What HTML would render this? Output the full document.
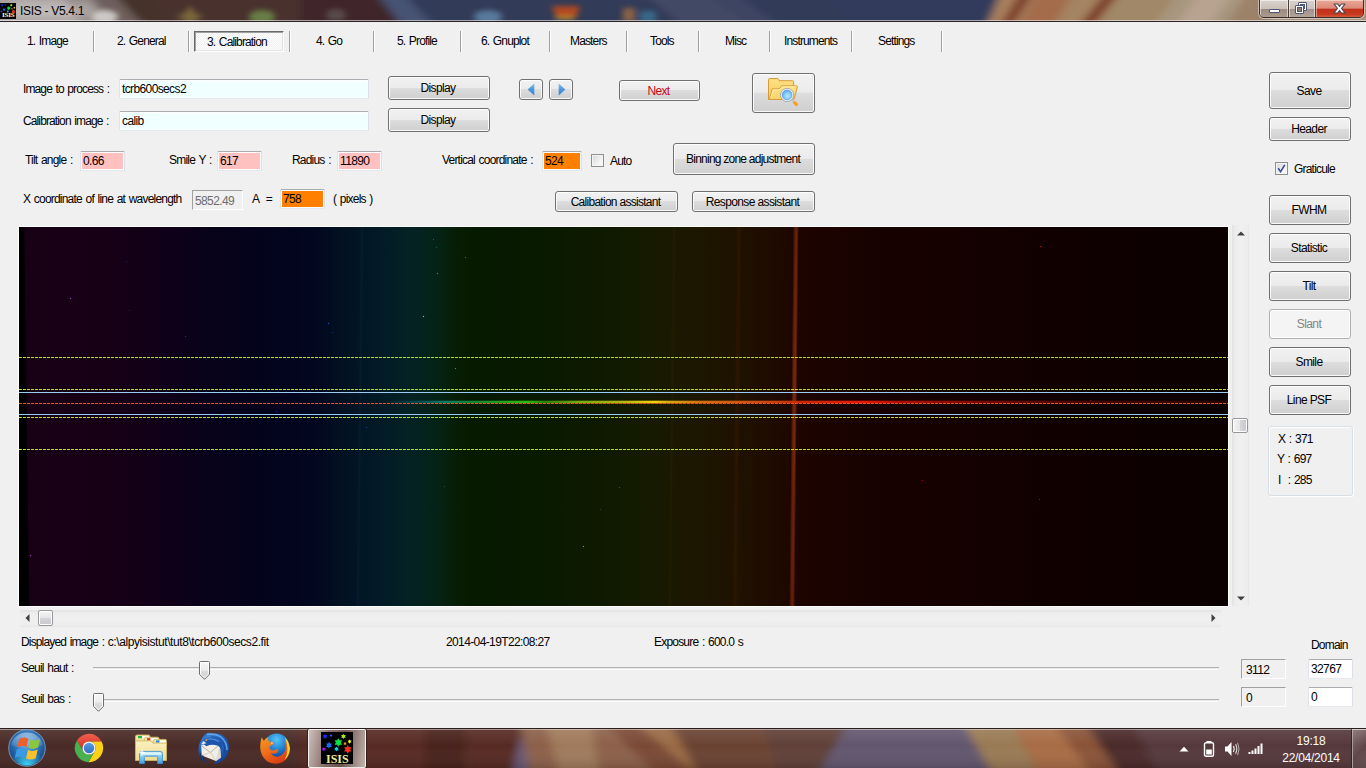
<!DOCTYPE html>
<html><head><meta charset="utf-8"><title>ISIS - V5.4.1</title>
<style>
html,body{margin:0;padding:0;}
body{width:1366px;height:768px;overflow:hidden;position:relative;background:#f0f0f0;font-family:"Liberation Sans",sans-serif;font-size:11px;color:#000;}
.a{position:absolute;white-space:pre;}
.t{position:absolute;white-space:pre;line-height:14px;height:14px;font-size:12px;letter-spacing:-0.8px;word-spacing:1.1px;}
/* title bar */
#tb{position:absolute;left:0;top:0;width:1366px;height:22px;overflow:hidden;background:#44302c;}
#tb .l1{position:absolute;left:0;top:20px;width:1366px;height:1px;background:rgba(255,255,255,.55);}
#tb .l2{position:absolute;left:0;top:21px;width:1366px;height:1px;background:#2a2424;}
/* buttons */
.b{position:absolute;box-sizing:border-box;border:1px solid #707070;border-radius:3px;
 background:linear-gradient(#f2f2f2 0%,#ebebeb 48%,#dddddd 50%,#cfcfcf 100%);box-shadow:inset 0 0 0 1px rgba(255,255,255,.85);
 text-align:center;font-size:12px;letter-spacing:-0.62px;white-space:pre;}
.b span{position:absolute;left:-2px;right:0;top:50%;margin-top:-7px;line-height:14px;}
.b.dis{border-color:#adb2b5;background:#f4f4f4;color:#838383;}
/* inputs */
.in{position:absolute;box-sizing:border-box;border-radius:1.5px;box-shadow:inset 0 0 0 1px #fff;border:1px solid #abadb3;border-top-color:#abadb3;border-color:#abadb3 #dbdfe6 #e3e9ef #e2e3ea;background:#f0ffff;font-size:12px;letter-spacing:-0.62px;line-height:14px;padding:2px 0 0 2px;white-space:pre;}
.in3{position:absolute;box-sizing:border-box;border:1px solid;border-color:#a0a0a0 #fff #fff #a0a0a0;background:#f0f0f0;font-size:12px;letter-spacing:-0.62px;line-height:14px;padding:3px 0 0 4px;white-space:pre;}
.sep{position:absolute;top:31px;width:1px;height:21px;background:#a0a0a0;box-shadow:1px 0 0 #fff;}
</style></head><body>

<!-- TITLE BAR -->
<div id="tb">
 <svg class="a" style="left:0;top:0" width="1366" height="22" viewBox="0 0 1366 22">
  <defs><filter id="bt" x="-5%" y="-80%" width="110%" height="260%"><feGaussianBlur stdDeviation="5 2.5"/></filter>
  <filter id="bt2" x="-50%" y="-80%" width="200%" height="260%"><feGaussianBlur stdDeviation="3 2.5"/></filter></defs>
  <g filter="url(#bt)">
   <rect x="-20" y="-10" width="1406" height="42" fill="#44302c"/>
   <polygon points="-20,-10 110,-10 150,32 -20,32" fill="#6e5f5b"/>
   <polygon points="-20,-10 85,-10 118,32 -20,32" fill="#8f8583"/>
   <polygon points="-20,-10 60,-10 85,32 -20,32" fill="#a9a19f"/>
   <polygon points="150,-10 300,-10 300,32 170,32" fill="#4a322d"/>
   <polygon points="300,-10 374,-10 407,32 300,32" fill="#40282a"/>
   <polygon points="374,-10 1002,-10 984,32 407,32" fill="#313a58"/>
   <polygon points="374,-10 400,-10 440,32 407,32" fill="#465272"/>
   <polygon points="640,-10 700,-10 760,32 690,32" fill="#424965"/>
   <polygon points="700,-10 730,-10 790,32 760,32" fill="#3c4563"/>
   <polygon points="820,-10 1002,-10 984,32 860,32" fill="#303b5b"/>
   <polygon points="1002,-10 1400,-10 1400,32 984,32" fill="#a8805f"/>
   <polygon points="1022,-10 1036,-10 1008,32 996,32" fill="#7c3e28"/>
   <polygon points="1040,-10 1075,-10 1050,32 1015,32" fill="#a46c4c"/>
   <polygon points="1075,-10 1105,-10 1075,32 1050,32" fill="#a48462"/>
   <polygon points="1108,-10 1122,-10 1088,32 1074,32" fill="#7c3e28"/>
   <polygon points="1124,-10 1180,-10 1150,32 1092,32" fill="#a08868"/>
   <polygon points="1180,-10 1400,-10 1400,32 1150,32" fill="#a8967f"/>
   <polygon points="1200,-10 1235,-10 1205,32 1172,32" fill="#b8a290"/>
   <polygon points="1250,-10 1290,-10 1262,32 1220,32" fill="#9c8268"/>
   <polygon points="1300,-10 1400,-10 1400,32 1280,32" fill="#a8927e"/>
  </g>
  <g filter="url(#bt2)">
   <ellipse cx="105" cy="17" rx="13" ry="7" fill="#d4d0ce" opacity=".9"/>
   <polygon points="190,6 196,14 204,16 196,20 190,26 184,20 176,16 184,14" fill="#8a7440" opacity=".8"/>
   <ellipse cx="262" cy="17" rx="13" ry="7" fill="#70904a" opacity=".8"/>
   <ellipse cx="336" cy="15" rx="10" ry="6" fill="#6a6060" opacity=".6"/>
   <ellipse cx="488" cy="17" rx="14" ry="7" fill="#6a94b8" opacity=".7"/>
   <polygon points="552,6 580,6 576,18 556,18" fill="#b8481c" opacity=".95"/>
   <rect x="556" y="16" width="18" height="4" fill="#c8a030" opacity=".7"/>
   <rect x="623" y="8" width="12" height="14" fill="#a87040" opacity=".75"/>
   <rect x="640" y="11" width="16" height="12" fill="#3a7a9a" opacity=".7"/>
  </g>
 </svg>
 <!-- text glow -->
 <div class="a" style="left:10px;top:3px;width:85px;height:15px;border-radius:8px;background:rgba(255,255,255,.28);filter:blur(5px)"></div>
 <!-- app icon -->
 <div class="a" style="left:0;top:3px;width:16px;height:16px;background:#000;overflow:hidden">
  <svg class="a" style="left:0;top:0" width="16" height="16" viewBox="0 0 32 32"><polygon points="4.10,1.70 4.88,3.04 6.44,3.05 5.67,4.40 6.44,5.75 4.88,5.76 4.10,7.10 3.32,5.76 1.76,5.75 2.53,4.40 1.76,3.05 3.32,3.04" fill="#1a28f0"/><polygon points="10.10,2.10 10.54,2.85 11.40,2.85 10.97,3.60 11.40,4.35 10.54,4.35 10.10,5.10 9.66,4.35 8.80,4.35 9.23,3.60 8.80,2.85 9.66,2.85" fill="#1a6af0"/><polygon points="22.50,1.70 23.28,3.04 24.84,3.05 24.07,4.40 24.84,5.75 23.28,5.76 22.50,7.10 21.72,5.76 20.16,5.75 20.93,4.40 20.16,3.05 21.72,3.04" fill="#a0e820"/><polygon points="17.40,6.20 18.65,8.34 21.12,8.35 19.89,10.50 21.12,12.65 18.65,12.66 17.40,14.80 16.15,12.66 13.68,12.65 14.91,10.50 13.68,8.35 16.15,8.34" fill="#08e048"/><polygon points="28.60,7.30 29.24,8.39 30.51,8.40 29.88,9.50 30.51,10.60 29.24,10.61 28.60,11.70 27.96,10.61 26.69,10.60 27.32,9.50 26.69,8.40 27.96,8.39" fill="#f0f020"/><polygon points="24.00,9.80 24.52,10.70 25.56,10.70 25.04,11.60 25.56,12.50 24.52,12.50 24.00,13.40 23.48,12.50 22.44,12.50 22.96,11.60 22.44,10.70 23.48,10.70" fill="#f09a20"/><polygon points="8.00,9.80 8.99,11.49 10.94,11.50 9.97,13.20 10.94,14.90 8.99,14.91 8.00,16.60 7.01,14.91 5.06,14.90 6.03,13.20 5.06,11.50 7.01,11.49" fill="#1a6af8"/><polygon points="2.90,14.90 3.54,15.99 4.81,16.00 4.18,17.10 4.81,18.20 3.54,18.21 2.90,19.30 2.26,18.21 0.99,18.20 1.62,17.10 0.99,16.00 2.26,15.99" fill="#a010e8"/><polygon points="15.50,14.50 16.23,15.74 17.67,15.75 16.95,17.00 17.67,18.25 16.23,18.26 15.50,19.50 14.78,18.26 13.33,18.25 14.05,17.00 13.33,15.75 14.77,15.74" fill="#10d0f0"/><polygon points="26.80,13.10 28.05,15.24 30.52,15.25 29.29,17.40 30.52,19.55 28.05,19.56 26.80,21.70 25.55,19.56 23.08,19.55 24.31,17.40 23.08,15.25 25.55,15.24" fill="#f83018"/></svg>
  <span class="a" style="left:2px;top:9px;font:bold 7px/7px 'Liberation Serif',serif;color:#fafad8;letter-spacing:-0.2px">ISIS</span>
 </div>
 <span class="a" style="left:20px;top:4px;font-size:12px;line-height:15px;letter-spacing:-0.3px;color:#000">ISIS - V5.4.1</span>
 <!-- caption buttons -->
 <div class="a" style="left:1259px;top:-1px;width:105px;height:19px;box-sizing:border-box;border:1px solid #3a2e2c;border-radius:0 0 5px 5px;overflow:hidden;box-shadow:0 0 0 1px rgba(255,255,255,.45)">
  <div class="a" style="left:0;top:0;width:28px;height:18px;background:linear-gradient(180deg,#d9d2cd 0%,#cbc1ba 48%,#9b8b7f 52%,#ad9c8f 100%);box-shadow:inset 0 0 0 1px rgba(255,255,255,.55)"></div>
  <div class="a" style="left:28px;top:0;width:1px;height:18px;background:#4a3c38"></div>
  <div class="a" style="left:29px;top:0;width:26px;height:18px;background:linear-gradient(180deg,#d9d2cd 0%,#cbc1ba 48%,#a1938a 52%,#b3a69c 100%);box-shadow:inset 0 0 0 1px rgba(255,255,255,.55)"></div>
  <div class="a" style="left:55px;top:0;width:1px;height:18px;background:#4a3c38"></div>
  <div class="a" style="left:56px;top:0;width:48px;height:18px;background:linear-gradient(180deg,#eba898 0%,#dc8a78 45%,#c4301a 52%,#c83a20 80%,#d8684a 100%);box-shadow:inset 0 0 0 1px rgba(255,255,255,.45)"></div>
  <!-- minimize -->
  <div class="a" style="left:9px;top:9px;width:11px;height:4px;box-sizing:border-box;background:#fff;border:1px solid #4d5370;border-radius:1px"></div>
  <!-- restore -->
  <div class="a" style="left:38px;top:2px;width:9px;height:9px;box-sizing:border-box;border:1px solid #4d5370;border-radius:1px;background:#fff"><i class="a" style="left:2px;top:2px;width:3px;height:3px;background:#b7ada6;box-shadow:0 0 0 1px #4d5370"></i></div>
  <div class="a" style="left:35px;top:5px;width:9px;height:9px;box-sizing:border-box;border:1px solid #4d5370;border-radius:1px;background:#fff"><i class="a" style="left:2px;top:2px;width:3px;height:3px;background:#8d7d72;box-shadow:0 0 0 1px #4d5370"></i></div>
  <!-- close -->
  <svg class="a" style="left:73px;top:3px" width="13" height="11" viewBox="0 0 13 11"><path d="M1 1 H4.6 L6.5 3.3 L8.4 1 H12 L8.6 5.4 L12 10 H8.4 L6.5 7.5 L4.6 10 H1 L4.4 5.4 Z" fill="#fff" stroke="#4a4450" stroke-width="1.1" stroke-linejoin="round"/></svg>
 </div>
 <div class="l1"></div><div class="l2"></div>
</div>

<!-- CLIENT -->
<div id="tabs">
<span class="t" style="letter-spacing:-0.86px;left:27px;top:34px">1. Image</span>
<span class="t" style="letter-spacing:-0.86px;left:117px;top:34px">2. General</span>
<div class="a" style="left:194px;top:31px;width:90px;height:21px;box-sizing:border-box;border:1px solid;border-color:#696969 #fff #fff #696969;box-shadow:inset 1px 1px 0 #a0a0a0,inset -1px -1px 0 #e3e3e3;background:repeating-conic-gradient(#ffffff 0 25%,#f0f0f0 0 50%) 0 0/2px 2px"></div>
<span class="t" style="letter-spacing:-0.86px;left:207px;top:35px">3. Calibration</span>
<span class="t" style="letter-spacing:-0.86px;left:316px;top:34px">4. Go</span>
<span class="t" style="letter-spacing:-0.86px;left:397px;top:34px">5. Profile</span>
<span class="t" style="letter-spacing:-0.86px;left:481px;top:34px">6. Gnuplot</span>
<span class="t" style="letter-spacing:-0.86px;left:570px;top:34px">Masters</span>
<span class="t" style="letter-spacing:-0.86px;left:650px;top:34px">Tools</span>
<span class="t" style="letter-spacing:-0.86px;left:725px;top:34px">Misc</span>
<span class="t" style="letter-spacing:-0.86px;left:784px;top:34px">Instruments</span>
<span class="t" style="letter-spacing:-0.86px;left:878px;top:34px">Settings</span>
<div class="sep" style="left:93px"></div><div class="sep" style="left:188px"></div><div class="sep" style="left:289px"></div><div class="sep" style="left:373px"></div><div class="sep" style="left:460px"></div><div class="sep" style="left:549px"></div><div class="sep" style="left:626px"></div><div class="sep" style="left:698px"></div><div class="sep" style="left:769px"></div><div class="sep" style="left:851px"></div><div class="sep" style="left:941px"></div>
</div>

<!-- ROW 1/2 -->
<span class="t" style="left:23px;top:82px;letter-spacing:-0.88px">Image to process :</span>
<div class="in" style="left:119px;top:79px;width:250px;height:20px">tcrb600secs2</div>
<span class="t" style="left:23px;top:114px;letter-spacing:-0.88px">Calibration image :</span>
<div class="in" style="left:119px;top:111px;width:250px;height:20px">calib</div>
<div class="b" style="left:388px;top:76px;width:102px;height:24px"><span>Display</span></div>
<div class="b" style="left:388px;top:108px;width:102px;height:24px"><span>Display</span></div>
<div class="b" style="left:519px;top:79px;width:24px;height:21px"><svg class="a" style="left:7px;top:3px" width="8" height="13" viewBox="0 0 8 13"><defs><linearGradient id="ar" x1="0" y1="0" x2="0" y2="1"><stop offset="0" stop-color="#86c0ec"/><stop offset=".5" stop-color="#4a98dc"/><stop offset="1" stop-color="#3a84d0"/></linearGradient></defs><path d="M7.3 0.6 L0.6 6.5 L7.3 12.4 Z" fill="url(#ar)"/></svg></div>
<div class="b" style="left:549px;top:79px;width:24px;height:21px"><svg class="a" style="left:8px;top:3px" width="8" height="13" viewBox="0 0 8 13"><path d="M0.7 0.6 L7.4 6.5 L0.7 12.4 Z" fill="url(#ar)"/></svg></div>
<div class="b" style="left:619px;top:80px;width:81px;height:21px;color:#c60a18"><span>Next</span></div>
<div class="b" style="left:752px;top:73px;width:63px;height:40px" id="folderbtn"><svg class="a" style="left:13px;top:2px" width="34" height="32" viewBox="766 76 34 32">
<defs><linearGradient id="fo1" x1="0" y1="0" x2="0" y2="1"><stop offset="0" stop-color="#fbe084"/><stop offset="1" stop-color="#f5cd5c"/></linearGradient>
<linearGradient id="fo2" x1="0" y1="0" x2="0" y2="1"><stop offset="0" stop-color="#fde48c"/><stop offset="1" stop-color="#f7d468"/></linearGradient>
<radialGradient id="gl" cx="55%" cy="60%" r="60%"><stop offset="0" stop-color="#b4ecfc"/><stop offset=".6" stop-color="#7cc4f4"/><stop offset="1" stop-color="#4a9ae8"/></radialGradient></defs>
<path d="M768.5 79.5 Q768.5 78.5 769.5 78.5 H777.5 Q778.5 78.5 778.7 79.5 L779 80.7 H792.5 Q793.6 80.7 793.6 81.8 V99.5 H768.5 Z" fill="url(#fo1)" stroke="#d99a38" stroke-width="1"/>
<path d="M769.3 99.5 L772.3 88.8 H779.4 L781.6 85.8 H796.4 Q797.6 85.8 797.3 87 L794 99.5 Z" fill="url(#fo2)" stroke="#d99a38" stroke-width="1" stroke-linejoin="round"/>
<path d="M770.6 98.4 L773.2 89.8 H779.9 L782.1 86.8 H796" fill="none" stroke="#fff3c0" stroke-width=".8" opacity=".9"/>
<path d="M791.3 99.3 L796.3 104.3" stroke="#c4c8d2" stroke-width="2.6" stroke-linecap="round"/>
<path d="M794.6 102.6 L796.4 104.4" stroke="#f6a21c" stroke-width="3.2" stroke-linecap="round"/>
<circle cx="787.1" cy="94.9" r="5.7" fill="url(#gl)" stroke="#f4f6fa" stroke-width="1.5"/>
<circle cx="787.1" cy="94.9" r="6.6" fill="none" stroke="#8c94a4" stroke-width=".7"/>
<circle cx="787.1" cy="94.9" r="4.9" fill="none" stroke="#3c8ce0" stroke-width=".7" opacity=".8"/>
</svg></div>

<!-- ROW 3 -->
<span class="t" style="left:25px;top:153px">Tilt angle :</span>
<div class="in" style="left:80px;top:151px;width:45px;height:20px;background:#ffc0c0;box-shadow:inset 0 0 0 1px #fff">0.66</div>
<span class="t" style="left:169px;top:153px">Smile Y :</span>
<div class="in" style="left:217px;top:151px;width:45px;height:20px;background:#ffc0c0;box-shadow:inset 0 0 0 1px #fff">617</div>
<span class="t" style="left:292px;top:153px">Radius :</span>
<div class="in" style="left:337px;top:151px;width:45px;height:20px;background:#ffc0c0;box-shadow:inset 0 0 0 1px #fff">11890</div>
<span class="t" style="left:442px;top:153px">Vertical coordinate :</span>
<div class="in" style="left:542px;top:151px;width:40px;height:20px;background:#ff8000;box-shadow:inset 0 0 0 1px #fff">524</div>
<div class="a" style="left:591px;top:154px;width:13px;height:13px;box-sizing:border-box;border:1px solid #8e8f8f;background:linear-gradient(135deg,#d5d5d5,#f6f6f6 70%);box-shadow:inset 0 0 0 1px #f4f4f4"></div>
<span class="t" style="left:610px;top:154px">Auto</span>
<div class="b" style="left:673px;top:143px;width:142px;height:32px"><span style="letter-spacing:-0.76px">Binning zone adjustment</span></div>

<!-- ROW 4 -->
<span class="t" style="left:23px;top:192px">X coordinate of line at wavelength</span>
<div class="in3" style="left:192px;top:190px;width:51px;height:20px;color:#6d6d6d;padding-left:2px">5852.49</div>
<span class="t" style="left:252px;top:192px">A  =</span>
<div class="in" style="left:280px;top:189px;width:45px;height:20px;background:#ff8000;box-shadow:inset 0 0 0 1px #fff">758</div>
<span class="t" style="left:333px;top:192px">( pixels )</span>
<div class="b" style="left:555px;top:191px;width:123px;height:21px"><span style="letter-spacing:-0.72px">Calibation assistant</span></div>
<div class="b" style="left:692px;top:191px;width:123px;height:21px"><span>Response assistant</span></div>

<!-- RIGHT PANEL -->
<div class="b" style="left:1269px;top:72px;width:82px;height:37px"><span>Save</span></div>
<div class="b" style="left:1269px;top:117px;width:82px;height:24px"><span>Header</span></div>
<div class="a" style="left:1275px;top:162px;width:13px;height:13px;box-sizing:border-box;border:1px solid #8e8f8f;background:linear-gradient(135deg,#d5d5d5,#f6f6f6 70%);box-shadow:inset 0 0 0 1px #f4f4f4"><svg class="a" style="left:1px;top:1px" width="9" height="9" viewBox="0 0 9 9"><path d="M1.2 4.2 L3.6 7.6 L7.8 0.8" fill="none" stroke="#3a4a9c" stroke-width="1.6"/></svg></div>
<span class="t" style="left:1294px;top:162px">Graticule</span>
<div class="b" style="left:1269px;top:195px;width:82px;height:30px"><span>FWHM</span></div>
<div class="b" style="left:1269px;top:233px;width:82px;height:30px"><span>Statistic</span></div>
<div class="b" style="left:1269px;top:271px;width:82px;height:30px"><span>Tilt</span></div>
<div class="b dis" style="left:1269px;top:309px;width:82px;height:30px"><span>Slant</span></div>
<div class="b" style="left:1269px;top:347px;width:82px;height:30px"><span>Smile</span></div>
<div class="b" style="left:1269px;top:385px;width:82px;height:30px"><span>Line PSF</span></div>
<div class="a" style="left:1268px;top:426px;width:85px;height:70px;box-sizing:border-box;border:1px solid #d5dfe5;border-radius:3px;box-shadow:inset 1px 1px 0 #fff,1px 1px 0 #fff"></div>
<span class="t" style="left:1278px;top:432px">X : 371</span>
<span class="t" style="left:1277px;top:452px">Y : 697</span>
<span class="t" style="left:1278px;top:473px">I  : 285</span>

<!-- IMAGE -->
<!--IMG--><div id="img" class="a" style="left:19px;top:227px;width:1209px;height:379px;overflow:hidden;background:linear-gradient(90deg,#180015 0px,#170016 81px,#100018 141px,#08021a 186px,#04031c 241px,#02051e 281px,#020a20 306px,#021122 321px,#021a26 361px,#042224 391px,#052214 421px,#061e06 436px,#061a00 451px,#081a00 521px,#0e1a00 581px,#161a00 631px,#1c1700 671px,#1f1200 716px,#1e0b00 756px,#1d0400 781px,#190200 831px,#140100 931px,#0f0000 1081px,#0b0000 1209px)">
<svg class="a" style="left:0;top:0" width="12" height="379" viewBox="0 0 12 379"><polygon points="0,0 5.2,0 10.2,379 0,379" fill="#000"/></svg>
<div class="a" style="left:339px;top:-4px;width:4px;height:387px;background:linear-gradient(90deg,transparent,rgba(20,60,120,.14),transparent);transform:skewX(-0.66deg)"></div>
<div class="a" style="left:651px;top:-4px;width:4px;height:387px;background:linear-gradient(90deg,transparent,rgba(60,50,0,.18),transparent);transform:skewX(-0.66deg)"></div>
<div class="a" style="left:715px;top:-4px;width:6px;height:387px;background:linear-gradient(90deg,transparent,rgba(90,40,0,.22),transparent);transform:skewX(-0.66deg)"></div>
<div class="a" style="left:772px;top:-4px;width:6px;height:387px;background:linear-gradient(90deg,transparent,#6c2408 35%,#7a2a0a 65%,transparent);transform:skewX(-0.6deg);-webkit-mask-image:linear-gradient(180deg,rgba(0,0,0,.8),#000 45%,rgba(0,0,0,.75));mask-image:linear-gradient(180deg,rgba(0,0,0,.8),#000 45%,rgba(0,0,0,.75))"></div>
<div class="a" style="left:0;top:173px;width:1209px;height:4px;background:linear-gradient(90deg,rgba(0,0,0,0) 0px,rgba(0,60,80,0) 366px,rgba(0,110,120,.6) 401px,#0a806a 426px,#109030 456px,#30c810 508px,#2a8a08 526px,#80b810 561px,#b8c010 601px,#ffe010 636px,#e0b010 651px,#e07810 681px,#d85010 741px,#d02c08 781px,#f81808 845px,#b81008 881px,#800a04 961px,#4a0602 1061px,#2a0301 1209px);-webkit-mask-image:linear-gradient(180deg,transparent,#000 40%,#000 60%,transparent);mask-image:linear-gradient(180deg,transparent,#000 40%,#000 60%,transparent)"></div>
<div class="a" style="left:0;top:130px;width:1209px;height:1px;background:repeating-linear-gradient(90deg,#b5e61d 0 3px,transparent 3px 4px)"></div>
<div class="a" style="left:0;top:162px;width:1209px;height:1px;background:repeating-linear-gradient(90deg,#b5e61d 0 3px,transparent 3px 4px)"></div>
<div class="a" style="left:0;top:190px;width:1209px;height:1px;background:repeating-linear-gradient(90deg,#b5e61d 0 3px,transparent 3px 4px)"></div>
<div class="a" style="left:0;top:222px;width:1209px;height:1px;background:repeating-linear-gradient(90deg,#b5e61d 0 3px,transparent 3px 4px)"></div>
<div class="a" style="left:0;top:165px;width:1209px;height:1px;background:#99ccf5"></div>
<div class="a" style="left:0;top:187px;width:1209px;height:1px;background:#99ccf5"></div>
<div class="a" style="left:0;top:176px;width:1209px;height:1px;background:repeating-linear-gradient(90deg,#ff4a14 0 3px,transparent 3px 4px)"></div>
<div class="a" style="left:107px;top:34px;width:1px;height:1px;background:#301850;box-shadow:0 0 1px #301850"></div>
<div class="a" style="left:110px;top:83px;width:1px;height:1px;background:#301850;box-shadow:0 0 1px #301850"></div>
<div class="a" style="left:313px;top:105px;width:1px;height:1px;background:#183070;box-shadow:0 0 1px #183070"></div>
<div class="a" style="left:203px;top:188px;width:1px;height:1px;background:#2020c0;box-shadow:0 0 1px #2020c0"></div>
<div class="a" style="left:257px;top:184px;width:1px;height:1px;background:#2020c0;box-shadow:0 0 1px #2020c0"></div>
<div class="a" style="left:418px;top:46px;width:1px;height:1px;background:#20a060;box-shadow:0 0 1px #20a060"></div>
<div class="a" style="left:417px;top:20px;width:1px;height:1px;background:#106040;box-shadow:0 0 1px #106040"></div>
<div class="a" style="left:347px;top:200px;width:1px;height:1px;background:#104080;box-shadow:0 0 1px #104080"></div>
<div class="a" style="left:425px;top:259px;width:1px;height:1px;background:#205030;box-shadow:0 0 1px #205030"></div>
<div class="a" style="left:600px;top:260px;width:1px;height:1px;background:#405020;box-shadow:0 0 1px #405020"></div>
<div class="a" style="left:581px;top:282px;width:1px;height:1px;background:#304010;box-shadow:0 0 1px #304010"></div>
<div class="a" style="left:1071px;top:173px;width:1px;height:1px;background:#801010;box-shadow:0 0 1px #801010"></div>
<div class="a" style="left:1281px;top:-227px;width:1px;height:1px;background:#000;box-shadow:0 0 1px #000"></div>
<div class="a" style="left:51px;top:71px;width:1px;height:1px;background:#a040c0;box-shadow:0 0 1px #a040c0"></div>
<div class="a" style="left:404px;top:89px;width:1px;height:1px;background:#40e0b0;box-shadow:0 0 1px #40e0b0"></div>
<div class="a" style="left:309px;top:96px;width:1px;height:1px;background:#2050d0;box-shadow:0 0 1px #2050d0"></div>
<div class="a" style="left:436px;top:141px;width:1px;height:1px;background:#30a040;box-shadow:0 0 1px #30a040"></div>
<div class="a" style="left:564px;top:319px;width:1px;height:1px;background:#80a040;box-shadow:0 0 1px #80a040"></div>
<div class="a" style="left:11px;top:328px;width:1px;height:1px;background:#a030c0;box-shadow:0 0 1px #a030c0"></div>
<div class="a" style="left:1021px;top:19px;width:1px;height:1px;background:#c01010;box-shadow:0 0 1px #c01010"></div>
<div class="a" style="left:446px;top:30px;width:1px;height:1px;background:#208040;box-shadow:0 0 1px #208040"></div>
<div class="a" style="left:414px;top:12px;width:1px;height:1px;background:#206060;box-shadow:0 0 1px #206060"></div>
<div class="a" style="left:166px;top:109px;width:1px;height:1px;background:#4020a0;box-shadow:0 0 1px #4020a0"></div>
<div class="a" style="left:194px;top:223px;width:1px;height:1px;background:#2020a0;box-shadow:0 0 1px #2020a0"></div>
<div class="a" style="left:1020px;top:272px;width:1px;height:1px;background:#901010;box-shadow:0 0 1px #901010"></div>
<div class="a" style="left:903px;top:253px;width:1px;height:1px;background:#901010;box-shadow:0 0 1px #901010"></div>
</div><!--/IMG-->


<!-- picturebox edges -->
<div class="a" style="left:18px;top:226px;width:1211px;height:381px;box-sizing:border-box;border:1px solid;border-color:#fff"></div>
<!-- V SCROLL -->
<div class="a" style="left:1232px;top:225px;width:17px;height:381px;background:linear-gradient(90deg,#e3e3e3,#ededed 20%,#f0f0f0 50%,#ededed 90%,#e6e6e6)"></div>
<svg class="a" style="left:1237px;top:231px" width="8" height="5" viewBox="0 0 8 5"><path d="M0 4.5 L4 0.5 L8 4.5 Z" fill="#404040"/></svg>
<svg class="a" style="left:1237px;top:596px" width="8" height="5" viewBox="0 0 8 5"><path d="M0 0.5 L4 4.5 L8 0.5 Z" fill="#404040"/></svg>
<div class="a" style="left:1232px;top:418px;width:16px;height:15px;box-sizing:border-box;border:1px solid #979797;border-radius:2px;background:linear-gradient(90deg,#f4f4f4 0%,#e6e6e8 48%,#d6d6da 50%,#c6c6cc 100%);box-shadow:inset 0 0 0 1px #fff"></div>
<!-- H SCROLL -->
<div class="a" style="left:20px;top:610px;width:1201px;height:17px;background:linear-gradient(180deg,#e3e3e3,#ededed 20%,#f0f0f0 50%,#ededed 90%,#e6e6e6)"></div>
<svg class="a" style="left:25px;top:614px" width="5" height="8" viewBox="0 0 5 8"><path d="M4.5 0 L0.5 4 L4.5 8 Z" fill="#404040"/></svg>
<svg class="a" style="left:1211px;top:614px" width="5" height="8" viewBox="0 0 5 8"><path d="M0.5 0 L4.5 4 L0.5 8 Z" fill="#404040"/></svg>
<div class="a" style="left:38px;top:610px;width:15px;height:16px;box-sizing:border-box;border:1px solid #979797;border-radius:2px;background:linear-gradient(180deg,#f4f4f4 0%,#e6e6e8 48%,#d6d6da 50%,#c6c6cc 100%);box-shadow:inset 0 0 0 1px #fff"></div>
<!-- SLIDERS -->
<div class="a" style="left:93px;top:667px;width:1126px;height:3px;background:linear-gradient(180deg,#b0b0b0 0 1px,#e7eaea 1px 2px,#fcfcfc 2px 3px)"></div>
<div class="a" style="left:93px;top:699px;width:1126px;height:3px;background:linear-gradient(180deg,#b0b0b0 0 1px,#e7eaea 1px 2px,#fcfcfc 2px 3px)"></div>
<svg class="a" style="left:199px;top:661px" width="11" height="19" viewBox="0 0 11 19"><defs><linearGradient id="tg" x1="0" y1="0" x2="0" y2="1"><stop offset="0" stop-color="#f6f6f6"/><stop offset=".5" stop-color="#ececec"/><stop offset=".52" stop-color="#dcdcdc"/><stop offset="1" stop-color="#d0d0d0"/></linearGradient></defs><path d="M1.5 0.5 H9.5 A1 1 0 0 1 10.5 1.5 V13.3 L5.5 18.3 L0.5 13.3 V1.5 A1 1 0 0 1 1.5 0.5 Z" fill="url(#tg)" stroke="#6e6e6e"/><path d="M2 1.5 H9 A0.5 0.5 0 0 1 9.5 2 V12.9 L5.5 16.9 L1.5 12.9 V2 A0.5 0.5 0 0 1 2 1.5 Z" fill="none" stroke="#fff"/></svg>
<svg class="a" style="left:93px;top:693px" width="11" height="19" viewBox="0 0 11 19"><path d="M1.5 0.5 H9.5 A1 1 0 0 1 10.5 1.5 V13.3 L5.5 18.3 L0.5 13.3 V1.5 A1 1 0 0 1 1.5 0.5 Z" fill="url(#tg)" stroke="#6e6e6e"/><path d="M2 1.5 H9 A0.5 0.5 0 0 1 9.5 2 V12.9 L5.5 16.9 L1.5 12.9 V2 A0.5 0.5 0 0 1 2 1.5 Z" fill="none" stroke="#fff"/></svg>

<!-- BOTTOM -->
<span class="t" style="left:21px;top:635px;letter-spacing:-0.85px">Displayed image : <span style="letter-spacing:-0.42px">c:\alpyisistut\tut8\tcrb600secs2.fit</span></span>
<span class="t" style="left:446px;top:635px;letter-spacing:-0.62px">2014-04-19T22:08:27</span>
<span class="t" style="left:654px;top:635px">Exposure : 600.0 s</span>
<span class="t" style="left:21px;top:661px">Seuil haut :</span>
<span class="t" style="left:21px;top:692px">Seuil bas :</span>
<span class="t" style="left:1311px;top:638px">Domain</span>
<div class="in3" style="left:1241px;top:659px;width:45px;height:20px">3112</div>
<div class="in3" style="left:1241px;top:687px;width:45px;height:20px">0</div>
<div class="in" style="left:1308px;top:659px;width:45px;height:20px;background:#fff">32767</div>
<div class="in" style="left:1308px;top:687px;width:45px;height:20px;background:#fff">0</div>


<!-- TASKBAR -->
<div id="task" style="position:absolute;left:0;top:728px;width:1366px;height:40px;overflow:hidden;background:#50302a">
 <svg class="a" style="left:0;top:0" width="1366" height="40" viewBox="0 0 1366 40">
  <defs><filter id="bl" x="-5%" y="-50%" width="110%" height="200%"><feGaussianBlur stdDeviation="5 3"/></filter>
  <linearGradient id="tkv" x1="0" y1="0" x2="0" y2="1"><stop offset="0" stop-color="#fff" stop-opacity=".10"/><stop offset=".45" stop-color="#fff" stop-opacity="0"/><stop offset="1" stop-color="#000" stop-opacity=".12"/></linearGradient></defs>
  <g filter="url(#bl)">
   <rect x="-20" y="-10" width="1406" height="60" fill="#50322b"/>
   <rect x="-20" y="-10" width="320" height="60" fill="#492c27"/>
   <rect x="300" y="-10" width="220" height="60" fill="#562c23"/>
   <rect x="425" y="-10" width="40" height="60" fill="#4a241d"/>
   <polygon points="512,50 520,10 530,12 532,50" fill="#6a5a78"/>
   <polygon points="520,-10 670,-10 690,50 530,50" fill="#8c6048"/>
   <polygon points="545,-10 590,-10 600,50 560,50" fill="#a07a5c"/>
   <polygon points="600,-10 630,-10 700,50 660,50" fill="#7a4a34"/>
   <polygon points="630,-10 660,-10 720,50 700,50" fill="#9a6a44"/>
   <polygon points="668,-10 860,-10 820,50 700,50" fill="#6a4232"/>
   <polygon points="760,-10 860,-10 820,50 780,50" fill="#604038"/>
   <polygon points="852,-10 960,-10 995,50 815,50" fill="#62566e"/>
   <polygon points="960,-10 1010,-10 1040,50 995,50" fill="#9a7a54"/>
   <polygon points="1010,-10 1080,-10 1125,50 1040,50" fill="#a86c44"/>
   <polygon points="1050,-10 1085,-10 1125,50 1095,50" fill="#8a5238"/>
   <polygon points="1082,-10 1400,-10 1400,50 1122,50" fill="#4c2c29"/>
   <polygon points="1130,-10 1400,-10 1400,50 1160,50" fill="#55393a"/>
  </g>
  <rect x="0" y="0" width="1366" height="40" fill="url(#tkv)"/>
 </svg>
 <div style="position:absolute;left:0;top:0;width:1366px;height:1px;background:#2b1f1d"></div>
 <div style="position:absolute;left:0;top:1px;width:1366px;height:1px;background:rgba(255,255,255,.45)"></div>
 <!-- start orb -->
 <svg class="a" style="left:7px;top:0px" width="40" height="40" viewBox="0 0 40 40">
  <defs>
   <radialGradient id="orb" cx="50%" cy="35%" r="65%"><stop offset="0" stop-color="#6fb4e6"/><stop offset=".55" stop-color="#2a6fb4"/><stop offset=".85" stop-color="#1a4f8c"/><stop offset="1" stop-color="#123a6c"/></radialGradient>
   <radialGradient id="orbg" cx="50%" cy="100%" r="50%"><stop offset="0" stop-color="#40e0ff" stop-opacity=".95"/><stop offset="1" stop-color="#40e0ff" stop-opacity="0"/></radialGradient>
   <linearGradient id="orbh" x1="0" y1="0" x2="0" y2="1"><stop offset="0" stop-color="#fff" stop-opacity=".75"/><stop offset="1" stop-color="#fff" stop-opacity=".1"/></linearGradient>
  </defs>
  <circle cx="20" cy="20" r="18.3" fill="url(#orb)" stroke="#9fb4c8" stroke-opacity=".7" stroke-width="1"/>
  <circle cx="20" cy="20" r="17.5" fill="url(#orbg)"/>
  <path d="M4 17 A16.5 16.5 0 0 1 36 17 Q20 24 4 17 Z" fill="url(#orbh)" opacity=".55"/>
  <g transform="translate(20.6 20.3) scale(1.2) translate(-18.6 -20)"><path d="M11.5 12.2 Q15.5 9.8 19.3 12 L17.8 19 Q14 17.2 10 19.2 Z" fill="#f0602a"/>
  <path d="M20.8 12.6 Q24.5 14.6 29 12.3 L27.4 19.4 Q23.4 21.6 19.3 19.6 Z" fill="#8cc63e"/>
  <path d="M9.6 20.8 Q13.6 18.8 17.4 20.7 L15.8 27.8 Q12 25.8 8 28 Z" fill="#3a9ae8"/>
  <path d="M18.9 21.3 Q22.8 23.4 27 21.1 L25.4 28.2 Q21.4 30.4 17.3 28.4 Z" fill="#fbc02a"/></g>
 </svg>
 <!-- chrome -->
 <svg class="a" style="left:74px;top:5px" width="30" height="30" viewBox="0 0 30 30">
  <defs><linearGradient id="cr" x1="0" y1="0" x2="0" y2="1"><stop offset="0" stop-color="#f0604e"/><stop offset="1" stop-color="#d4261c"/></linearGradient>
  <linearGradient id="cb" x1="0" y1="0" x2="0" y2="1"><stop offset="0" stop-color="#5a9ae4"/><stop offset="1" stop-color="#2f6fc8"/></linearGradient></defs>
  <path d="M2.997 7.41 A14.2 14.2 0 0 1 27.57 8.4 L15 8.4 A6.6 6.6 0 0 0 9.284 18.3 Z" fill="url(#cr)"/>
  <path d="M27.57 8.4 A14.2 14.2 0 0 1 14.43 29.19 L20.716 18.3 A6.6 6.6 0 0 0 15 8.4 Z" fill="#fbd116"/>
  <path d="M14.43 29.19 A14.2 14.2 0 0 1 2.997 7.41 L9.284 18.3 A6.6 6.6 0 0 0 20.716 18.3 Z" fill="#48b04c"/>
  <circle cx="15" cy="15" r="6.6" fill="#f4f4f4"/>
  <circle cx="15" cy="15" r="5.2" fill="url(#cb)"/>
 </svg>
 <!-- explorer -->
 <svg class="a" style="left:134px;top:5px" width="34" height="32" viewBox="0 0 34 32">
  <defs><linearGradient id="exf" x1="0" y1="0" x2="0" y2="1"><stop offset="0" stop-color="#fbf0c0"/><stop offset="1" stop-color="#f0dc90"/></linearGradient>
  <linearGradient id="exs" x1="0" y1="0" x2="0" y2="1"><stop offset="0" stop-color="#c4ecff"/><stop offset=".45" stop-color="#7cc8f4"/><stop offset="1" stop-color="#4aa6e4"/></linearGradient></defs>
  <path d="M1.5 3.5 Q1.5 2 3 2 H14.5 Q16 2 16 3.5 V8 H1.5 Z" fill="#f3e2a0" stroke="#d2bb68" stroke-width=".8"/>
  <rect x="4" y="3" width="4" height="2.2" fill="#1fb83a"/><rect x="8" y="3" width="7" height="2.2" fill="#fff"/>
  <path d="M10.5 5.5 Q10.5 4.2 12 4.2 H23.5 Q25 4.2 25 5.5 V10 H10.5 Z" fill="#f3e2a0" stroke="#d2bb68" stroke-width=".8"/>
  <rect x="13" y="5.2" width="3.6" height="2.2" fill="#d8342a"/><rect x="16.6" y="5.2" width="7" height="2.2" fill="#fff"/>
  <path d="M19.5 7.8 Q19.5 6.4 21 6.4 H31 Q32.5 6.4 32.5 7.8 V12 H19.5 Z" fill="#f3e2a0" stroke="#d2bb68" stroke-width=".8"/>
  <rect x="22" y="7.4" width="3.6" height="2.2" fill="#2a86ea"/><rect x="25.6" y="7.4" width="6" height="2.2" fill="#fff"/>
  <path d="M1.5 8 H17 L19 10.2 H32.5 V27.5 H1.5 Z" fill="url(#exf)" stroke="#d2bb68" stroke-width=".8"/>
  <path d="M5.5 30.5 V20.8 Q5.5 18.4 8 18.4 H26 Q28.5 18.4 28.5 20.8 V30.5 H23.6 V24.4 Q23.6 23.2 22.4 23.2 H11.6 Q10.4 23.2 10.4 24.4 V30.5 Z" fill="url(#exs)" stroke="#3a94d6" stroke-width=".9" opacity=".95"/>
  <path d="M6.6 21 Q6.6 19.5 8.2 19.5 H25.8 Q27.4 19.5 27.4 21 V21.8 H6.6 Z" fill="#e8f8ff" opacity=".9"/>
  <path d="M8 14 L8.6 18.6 L13 19.4 L8.6 20.2 L8 25 L7.4 20.2 L3.5 19.4 L7.4 18.6 Z" fill="#fff" opacity=".85"/>
 </svg>
 <!-- thunderbird -->
 <svg class="a" style="left:197px;top:3px" width="34" height="34" viewBox="0 0 34 34">
  <defs><radialGradient id="tbd" cx="40%" cy="30%" r="75%"><stop offset="0" stop-color="#4f9ae6"/><stop offset=".55" stop-color="#1f62c0"/><stop offset="1" stop-color="#123c8a"/></radialGradient></defs>
  <path d="M8.5 2.8 Q11.5 .6 14.5 2.6 Q24 .8 30 8.5 Q34.5 17 29.5 25.5 Q25 32 16 33 Q20.5 29.5 21.5 25 L24.5 13.5 Q19 8.5 12.5 10 L7.5 14 Q4.5 18 5 25 Q6 29 9 31.5 Q3.5 29 1.8 22 Q.6 15 3.5 10 Q5.5 5.5 8.5 2.8 Z" fill="url(#tbd)"/>
  <path d="M10 3.5 Q18 2 24 6 Q30 11 30 19" fill="none" stroke="#7cb8f2" stroke-width="1.5" opacity=".75"/>
  <path d="M14 6 Q21 5.5 25.5 10.5 Q28.5 15 27 22" fill="none" stroke="#0f3a8a" stroke-width="1.2" opacity=".55"/>
  <path d="M4.2 14.5 L12.5 10.8 Q18 9.5 22.8 13.2 L24 26.5 L19 30 L4.8 24.5 Z" fill="#f2eee6"/>
  <path d="M4.2 14.5 L13.5 21.5 L22.8 13.2" fill="none" stroke="#b5aa98" stroke-width=".9"/>
  <path d="M4.8 24.5 L13.5 21.5 L19 30" fill="none" stroke="#cfc6b6" stroke-width=".8"/>
  <path d="M19 30 L24 26.5 L22.8 13.2" fill="#d8d0c2" opacity=".7"/>
  <path d="M6 10.5 Q8 6.5 13 6.5 Q21 6 25.5 12.5 L24.5 20 Q23.5 15.5 19.5 14.2 Q14 13 9.5 15.2 L7 13.5 Z" fill="#1d55ae"/>
  <path d="M9 8.5 Q16 6.5 22 10.5" fill="none" stroke="#5a9fe8" stroke-width="1.2" opacity=".8"/>
  <path d="M4 13.5 L6.5 10 L9.5 12.3 Z" fill="#e8eef6"/>
  <circle cx="9.2" cy="9.2" r=".9" fill="#f2a21e"/>
  <path d="M3 22 L5 30 M5.5 24.5 L8 31.3" stroke="#0f2f74" stroke-width="1.1"/>
 </svg>
 <!-- firefox -->
 <svg class="a" style="left:258px;top:3px" width="34" height="34" viewBox="0 0 34 34">
  <defs><radialGradient id="ffg" cx="50%" cy="25%" r="75%"><stop offset="0" stop-color="#58c4f4"/><stop offset=".55" stop-color="#1f7fd0"/><stop offset="1" stop-color="#143f94"/></radialGradient>
  <linearGradient id="fff" x1="0" y1="0" x2=".6" y2="1"><stop offset="0" stop-color="#f39a1e"/><stop offset=".55" stop-color="#ee6c1a"/><stop offset="1" stop-color="#d93c14"/></linearGradient></defs>
  <circle cx="18.5" cy="15" r="12.6" fill="url(#ffg)"/>
  <path d="M3.6 6.5 Q5.3 8 5.8 10 Q7 7 10.5 6 Q9.6 8.2 10.6 10 Q12.8 11.4 15.4 10.8 Q16.2 12.6 14 14 Q11.6 14.6 11.2 16.6 Q11.8 19 14.8 19.4 Q17.6 19 19.4 17.6 Q21.2 19.6 18.8 22 Q15.6 23.4 12.8 22 Q15.6 26.4 20.6 25.6 Q25.6 24 27.4 18.8 Q28.6 14 26.8 9 Q30.6 12 31.6 18 Q32 26 25 31 Q17 35 9 30.2 Q2 24.4 2.2 15.2 Q2.4 9.8 3.6 6.5 Z" fill="url(#fff)"/>
  <path d="M26.8 6.5 Q31.4 10.5 32 17.5 Q31.6 24.5 26.4 29.2 Q29.4 24 29.4 18 Q29.2 11.5 26.8 6.5 Z" fill="#fbd02c"/>
  <path d="M12.6 11.8 L14.8 11.6 L14 13.2 Z" fill="#fff"/>
 </svg>
 <!-- ISIS task button -->
 <div class="a" style="left:308px;top:1px;width:58px;height:39px;box-sizing:border-box;border:1px solid rgba(255,255,255,.85);border-radius:2px;background:linear-gradient(100deg,rgba(225,215,212,.85) 0%,rgba(150,130,125,.75) 35%,rgba(120,100,96,.7) 60%,rgba(215,205,200,.85) 100%);box-shadow:0 0 0 1px rgba(40,25,22,.7)"></div>
 <div class="a" style="left:321px;top:4px;width:32px;height:32px;background:#000;overflow:hidden">
  <svg class="a" style="left:0;top:0" width="32" height="32" viewBox="0 0 32 32"><polygon points="4.10,1.70 4.88,3.04 6.44,3.05 5.67,4.40 6.44,5.75 4.88,5.76 4.10,7.10 3.32,5.76 1.76,5.75 2.53,4.40 1.76,3.05 3.32,3.04" fill="#1a28f0"/><polygon points="10.10,2.10 10.54,2.85 11.40,2.85 10.97,3.60 11.40,4.35 10.54,4.35 10.10,5.10 9.66,4.35 8.80,4.35 9.23,3.60 8.80,2.85 9.66,2.85" fill="#1a6af0"/><polygon points="22.50,1.70 23.28,3.04 24.84,3.05 24.07,4.40 24.84,5.75 23.28,5.76 22.50,7.10 21.72,5.76 20.16,5.75 20.93,4.40 20.16,3.05 21.72,3.04" fill="#a0e820"/><polygon points="17.40,6.20 18.65,8.34 21.12,8.35 19.89,10.50 21.12,12.65 18.65,12.66 17.40,14.80 16.15,12.66 13.68,12.65 14.91,10.50 13.68,8.35 16.15,8.34" fill="#08e048"/><polygon points="28.60,7.30 29.24,8.39 30.51,8.40 29.88,9.50 30.51,10.60 29.24,10.61 28.60,11.70 27.96,10.61 26.69,10.60 27.32,9.50 26.69,8.40 27.96,8.39" fill="#f0f020"/><polygon points="24.00,9.80 24.52,10.70 25.56,10.70 25.04,11.60 25.56,12.50 24.52,12.50 24.00,13.40 23.48,12.50 22.44,12.50 22.96,11.60 22.44,10.70 23.48,10.70" fill="#f09a20"/><polygon points="8.00,9.80 8.99,11.49 10.94,11.50 9.97,13.20 10.94,14.90 8.99,14.91 8.00,16.60 7.01,14.91 5.06,14.90 6.03,13.20 5.06,11.50 7.01,11.49" fill="#1a6af8"/><polygon points="2.90,14.90 3.54,15.99 4.81,16.00 4.18,17.10 4.81,18.20 3.54,18.21 2.90,19.30 2.26,18.21 0.99,18.20 1.62,17.10 0.99,16.00 2.26,15.99" fill="#a010e8"/><polygon points="15.50,14.50 16.23,15.74 17.67,15.75 16.95,17.00 17.67,18.25 16.23,18.26 15.50,19.50 14.78,18.26 13.33,18.25 14.05,17.00 13.33,15.75 14.77,15.74" fill="#10d0f0"/><polygon points="26.80,13.10 28.05,15.24 30.52,15.25 29.29,17.40 30.52,19.55 28.05,19.56 26.80,21.70 25.55,19.56 23.08,19.55 24.31,17.40 23.08,15.25 25.55,15.24" fill="#f83018"/></svg>
  <span class="a" style="left:5px;top:21px;font:bold 12px/12px 'Liberation Serif',serif;color:#eeee99;letter-spacing:0">ISIS</span>
 </div>
 <!-- tray -->
 <svg class="a" style="left:1179px;top:18px" width="10" height="6" viewBox="0 0 10 6"><path d="M0.5 5.5 L5 0.8 L9.5 5.5 Z" fill="#fff"/></svg>
 <svg class="a" style="left:1203px;top:12px" width="12" height="18" viewBox="0 0 12 18"><rect x="3.5" y="1" width="5" height="2" fill="#fff"/><rect x="1.5" y="2.8" width="9" height="13.4" rx="1.5" fill="none" stroke="#fff" stroke-width="1.4"/><rect x="3.2" y="9.5" width="5.6" height="5" fill="#fff"/></svg>
 <svg class="a" style="left:1224px;top:12px" width="16" height="18" viewBox="0 0 16 18"><path d="M1 6.5 H3.5 L7.5 2 V16 L3.5 11.5 H1 Z" fill="#fff"/><path d="M9.5 6 Q11 9 9.5 12" fill="none" stroke="#fff" stroke-width="1.1"/><path d="M11.6 4.3 Q14 9 11.6 13.7" fill="none" stroke="#fff" stroke-width="1.1" opacity=".85"/><path d="M13.6 2.8 Q16.6 9 13.6 15.2" fill="none" stroke="#fff" stroke-width="1" opacity=".6"/></svg>
 <svg class="a" style="left:1248px;top:15px" width="16" height="12" viewBox="0 0 16 12"><rect x="0.5" y="9" width="2" height="2" fill="#fff"/><rect x="3.5" y="7.5" width="2" height="3.5" fill="#fff"/><rect x="6.5" y="5.5" width="2" height="5.5" fill="#fff"/><rect x="9.5" y="3" width="2" height="8" fill="#fff"/><rect x="12.5" y="0.5" width="2" height="10.5" fill="#fff"/></svg>
 <span class="a" style="left:1271px;top:6px;width:80px;text-align:center;font-size:12px;line-height:15px;letter-spacing:-0.25px;color:#fff">19:18</span>
 <span class="a" style="left:1271px;top:23px;width:80px;text-align:center;font-size:12px;line-height:15px;letter-spacing:-0.25px;color:#fff">22/04/2014</span>
 <div class="a" style="left:1352px;top:1px;width:15px;height:40px;box-sizing:border-box;border:1px solid rgba(255,255,255,.45);border-right:0;background:linear-gradient(135deg,rgba(255,255,255,.28),rgba(255,255,255,.06) 55%,rgba(255,255,255,.12));box-shadow:-1px 0 0 rgba(30,20,20,.6)"></div>
</div>
</body></html>
